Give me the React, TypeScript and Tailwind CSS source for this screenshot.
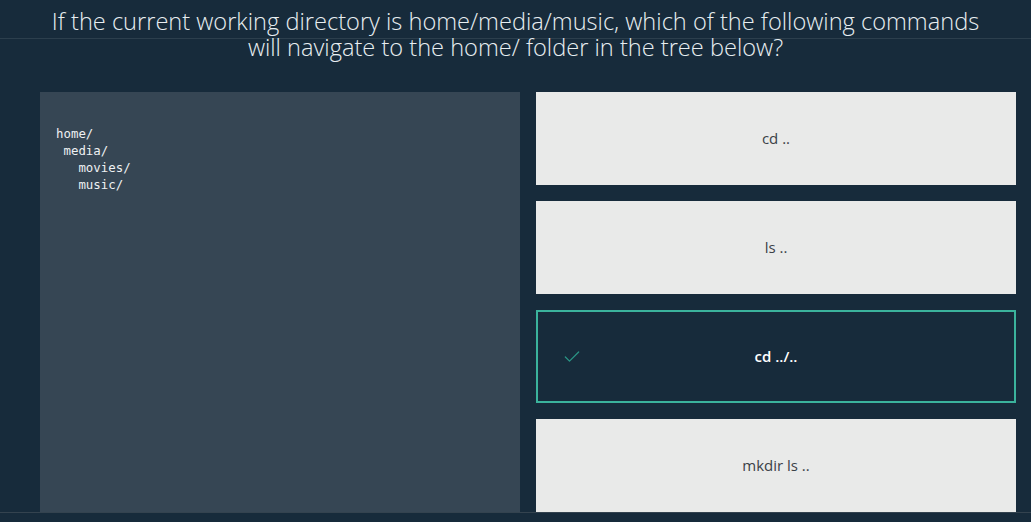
import { Check } from "lucide-react";

const answers = [
  { label: "cd ..", selected: false },
  { label: "ls ..", selected: false },
  { label: "cd ../..", selected: true },
  { label: "mkdir ls ..", selected: false },
];

const tree = ["home/", " media/", "   movies/", "   music/"];

export default function App() {
  return (
    <div className="relative h-[522px] w-[1031px] overflow-hidden bg-[#172b3b] font-['Open_Sans',sans-serif]">
      <div className="absolute left-0 right-0 top-[38px] h-px bg-[#2c3f4d]" />
      <h1 className="relative px-10 pt-[8px] text-center text-[23.6px] font-light leading-[26px] text-[#e8eef1]">
        If the current working directory is home/media/music, which of the following commands
        <br />
        will navigate to the home/ folder in the tree below?
      </h1>

      <div className="mt-[32px] flex h-[420px] gap-4 pl-10 pr-[15px]">
        <div className="w-[480px] bg-[#364654] px-4 pt-[33px]">
          <pre className="font-['DejaVu_Sans_Mono',monospace] text-[12.4px] leading-[17px] text-[#eef1f3]">
            {tree.join("\n")}
          </pre>
        </div>

        <div className="flex w-[480px] flex-col gap-4">
          {answers.map((a) =>
            a.selected ? (
              <div
                key={a.label}
                className="relative flex h-[93px] items-center justify-center border-2 border-[#3bb39c] bg-[#172b3b] text-[15px] font-semibold text-white"
              >
                <Check className="absolute left-[24px] h-[20px] w-[20px] text-[#2a9585]" strokeWidth={1.5} />
                {a.label}
              </div>
            ) : (
              <div
                key={a.label}
                className="flex h-[93px] items-center justify-center bg-[#e9eae9] text-[15px] text-[#3b4147]"
              >
                {a.label}
              </div>
            )
          )}
        </div>
      </div>
      <div className="h-px bg-[#34434f]" />
    </div>
  );
}
